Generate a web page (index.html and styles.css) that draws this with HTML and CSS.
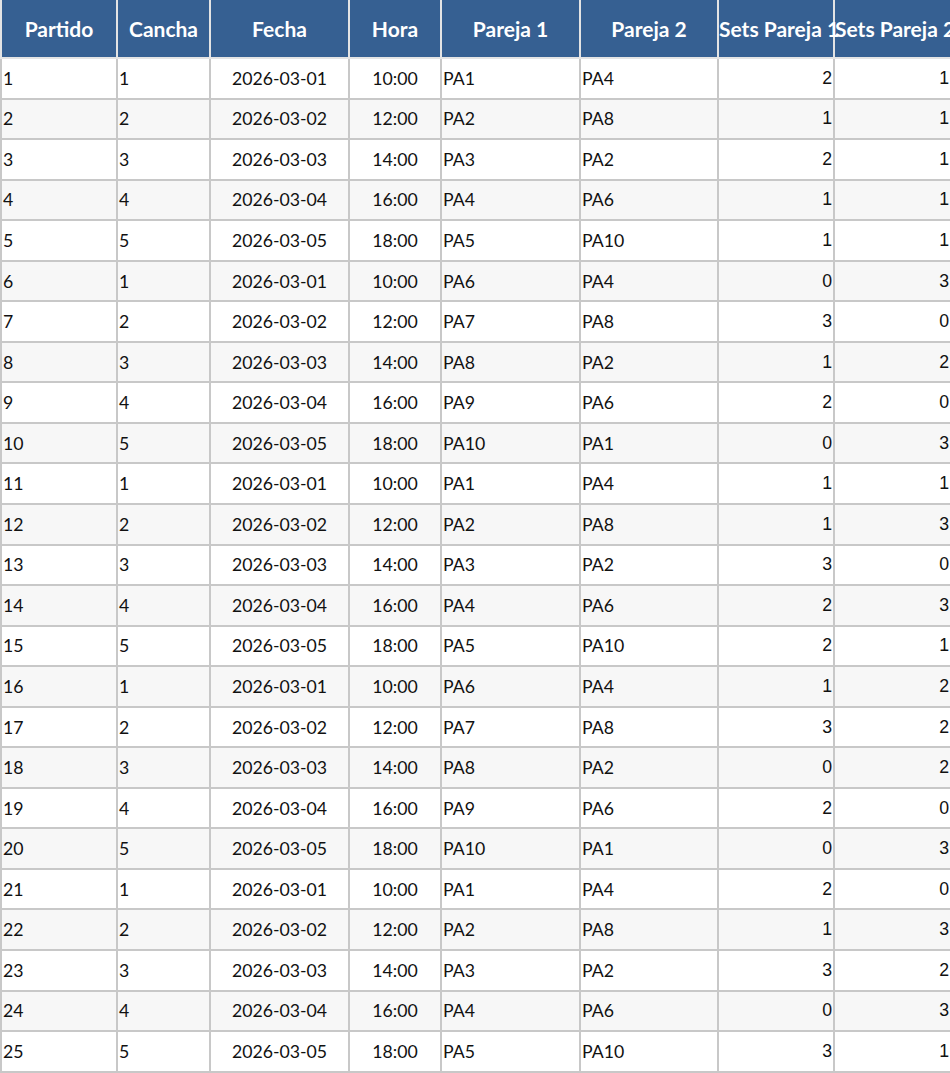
FILE: index.html
```html
<!DOCTYPE html>
<html lang="es">
<head>
<meta charset="utf-8">
<title>Partidos</title>
<link rel="stylesheet" href="styles.css">
</head>
<body>
<table class="grid">
<colgroup>
<col class="c1"><col class="c2"><col class="c3"><col class="c4"><col class="c5"><col class="c6"><col class="c7"><col class="c8">
</colgroup>
<thead>
<tr><th>Partido</th><th>Cancha</th><th>Fecha</th><th>Hora</th><th>Pareja 1</th><th>Pareja 2</th><th>Sets Pareja 1</th><th>Sets Pareja 2</th></tr>
</thead>
<tbody>
<tr><td>1</td><td>1</td><td class="ctr">2026-03-01</td><td class="ctr">10:00</td><td>PA1</td><td>PA4</td><td class="num">2</td><td class="num">1</td></tr>
<tr><td>2</td><td>2</td><td class="ctr">2026-03-02</td><td class="ctr">12:00</td><td>PA2</td><td>PA8</td><td class="num">1</td><td class="num">1</td></tr>
<tr><td>3</td><td>3</td><td class="ctr">2026-03-03</td><td class="ctr">14:00</td><td>PA3</td><td>PA2</td><td class="num">2</td><td class="num">1</td></tr>
<tr><td>4</td><td>4</td><td class="ctr">2026-03-04</td><td class="ctr">16:00</td><td>PA4</td><td>PA6</td><td class="num">1</td><td class="num">1</td></tr>
<tr><td>5</td><td>5</td><td class="ctr">2026-03-05</td><td class="ctr">18:00</td><td>PA5</td><td>PA10</td><td class="num">1</td><td class="num">1</td></tr>
<tr><td>6</td><td>1</td><td class="ctr">2026-03-01</td><td class="ctr">10:00</td><td>PA6</td><td>PA4</td><td class="num">0</td><td class="num">3</td></tr>
<tr><td>7</td><td>2</td><td class="ctr">2026-03-02</td><td class="ctr">12:00</td><td>PA7</td><td>PA8</td><td class="num">3</td><td class="num">0</td></tr>
<tr><td>8</td><td>3</td><td class="ctr">2026-03-03</td><td class="ctr">14:00</td><td>PA8</td><td>PA2</td><td class="num">1</td><td class="num">2</td></tr>
<tr><td>9</td><td>4</td><td class="ctr">2026-03-04</td><td class="ctr">16:00</td><td>PA9</td><td>PA6</td><td class="num">2</td><td class="num">0</td></tr>
<tr><td>10</td><td>5</td><td class="ctr">2026-03-05</td><td class="ctr">18:00</td><td>PA10</td><td>PA1</td><td class="num">0</td><td class="num">3</td></tr>
<tr><td>11</td><td>1</td><td class="ctr">2026-03-01</td><td class="ctr">10:00</td><td>PA1</td><td>PA4</td><td class="num">1</td><td class="num">1</td></tr>
<tr><td>12</td><td>2</td><td class="ctr">2026-03-02</td><td class="ctr">12:00</td><td>PA2</td><td>PA8</td><td class="num">1</td><td class="num">3</td></tr>
<tr><td>13</td><td>3</td><td class="ctr">2026-03-03</td><td class="ctr">14:00</td><td>PA3</td><td>PA2</td><td class="num">3</td><td class="num">0</td></tr>
<tr><td>14</td><td>4</td><td class="ctr">2026-03-04</td><td class="ctr">16:00</td><td>PA4</td><td>PA6</td><td class="num">2</td><td class="num">3</td></tr>
<tr><td>15</td><td>5</td><td class="ctr">2026-03-05</td><td class="ctr">18:00</td><td>PA5</td><td>PA10</td><td class="num">2</td><td class="num">1</td></tr>
<tr><td>16</td><td>1</td><td class="ctr">2026-03-01</td><td class="ctr">10:00</td><td>PA6</td><td>PA4</td><td class="num">1</td><td class="num">2</td></tr>
<tr><td>17</td><td>2</td><td class="ctr">2026-03-02</td><td class="ctr">12:00</td><td>PA7</td><td>PA8</td><td class="num">3</td><td class="num">2</td></tr>
<tr><td>18</td><td>3</td><td class="ctr">2026-03-03</td><td class="ctr">14:00</td><td>PA8</td><td>PA2</td><td class="num">0</td><td class="num">2</td></tr>
<tr><td>19</td><td>4</td><td class="ctr">2026-03-04</td><td class="ctr">16:00</td><td>PA9</td><td>PA6</td><td class="num">2</td><td class="num">0</td></tr>
<tr><td>20</td><td>5</td><td class="ctr">2026-03-05</td><td class="ctr">18:00</td><td>PA10</td><td>PA1</td><td class="num">0</td><td class="num">3</td></tr>
<tr><td>21</td><td>1</td><td class="ctr">2026-03-01</td><td class="ctr">10:00</td><td>PA1</td><td>PA4</td><td class="num">2</td><td class="num">0</td></tr>
<tr><td>22</td><td>2</td><td class="ctr">2026-03-02</td><td class="ctr">12:00</td><td>PA2</td><td>PA8</td><td class="num">1</td><td class="num">3</td></tr>
<tr><td>23</td><td>3</td><td class="ctr">2026-03-03</td><td class="ctr">14:00</td><td>PA3</td><td>PA2</td><td class="num">3</td><td class="num">2</td></tr>
<tr><td>24</td><td>4</td><td class="ctr">2026-03-04</td><td class="ctr">16:00</td><td>PA4</td><td>PA6</td><td class="num">0</td><td class="num">3</td></tr>
<tr><td>25</td><td>5</td><td class="ctr">2026-03-05</td><td class="ctr">18:00</td><td>PA5</td><td>PA10</td><td class="num">3</td><td class="num">1</td></tr>
</tbody>
</table>
</body>
</html>
```
FILE: styles.css
```css
html, body {
  margin: 0;
  padding: 0;
  background: #ffffff;
}

.grid {
  border-collapse: collapse;
  table-layout: fixed;
  width: 950px;
  font-family: Lato, "Liberation Sans", sans-serif;
  color: #111;
}

.c1 { width: 116px; }
.c2 { width: 93px; }
.c3 { width: 139px; }
.c4 { width: 92px; }
.c5 { width: 139px; }
.c6 { width: 138px; }
.c7 { width: 116px; }
.c8 { width: 117px; }

.grid th {
  background: #366092;
  color: #ffffff;
  font-weight: bold;
  font-size: 21px;
  height: 57px;
  padding: 0;
  text-align: center;
  white-space: nowrap;
  border: 2px solid #e4e4e4;
  border-top: none;
}

.grid td {
  font-size: 17.7px;
  height: 40.56px;
  padding: 0 1px;
  border: 2px solid #c8c8c8;
  white-space: nowrap;
  text-align: left;
  box-sizing: border-box;
}

.grid tbody tr:nth-child(even) td {
  background: #f7f7f7;
}

.grid td.ctr {
  text-align: center;
}

.grid td.num {
  text-align: right;
  font-family: "Liberation Sans", Arial, sans-serif;
  padding-right: 1px;
}
```
